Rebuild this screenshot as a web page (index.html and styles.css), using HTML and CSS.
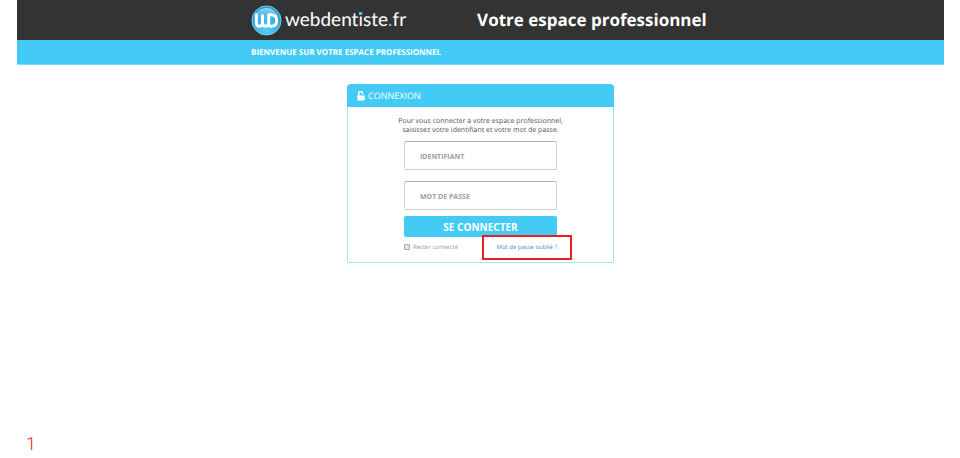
FILE: index.html
```html
<!DOCTYPE html>
<html lang="fr">
<head>
<meta charset="utf-8">
<title>Webdentiste.fr - Votre espace professionnel</title>
<link rel="stylesheet" href="styles.css">
</head>
<body>
<div class="page">
  <header class="topbar">
    <div class="container">
      <a class="brand" href="#">
        <svg class="brand-icon" viewBox="0 0 32 32" aria-hidden="true">
          <defs>
            <radialGradient id="disc" cx="50%" cy="85%" r="80%">
              <stop offset="0" stop-color="#4fd0f8"/>
              <stop offset="1" stop-color="#1c93cd"/>
            </radialGradient>
            <linearGradient id="shine" x1="0" y1="0" x2="0" y2="1">
              <stop offset="0" stop-color="#b4e3f7" stop-opacity=".8"/>
              <stop offset="1" stop-color="#58bfe9" stop-opacity=".2"/>
            </linearGradient>
          </defs>
          <circle cx="16" cy="16" r="15" fill="url(#disc)" stroke="#7fd0f2" stroke-width="1"/>
          <path d="M3 17a13 13 0 0 1 26-2C22 13 11 19 3 17Z" fill="url(#shine)"/>
          <path d="M5.500 10v8q0 4 3.200 4t3.200-4V11M11.900 18q0 4 3.200 4t3.200-4V10M18.300 10h2.700q5.500 0 5.500 6t-5.500 6h-1.200" fill="none" stroke="#fff" stroke-width="3" stroke-linecap="round" stroke-linejoin="round"/>
        </svg>
        <span class="brand-name">webdent<span class="brand-i">i</span>ste<span class="brand-dot">.</span>fr</span>
      </a>
      <h1 class="title">Votre espace professionnel</h1>
    </div>
  </header>
  <div class="welcome">
    <p class="container">BIENVENUE SUR VOTRE ESPACE PROFESSIONNEL</p>
  </div>
  <main class="card">
    <h2 class="card-head">
      <svg class="lock" viewBox="0 0 8 10" aria-hidden="true">
        <path d="M1.700 5V2.500a1.900 1.900 0 0 1 3.800 0v.8" fill="none" stroke="#fff" stroke-width="1.500"/>
        <path d="M.3 4.500h7.400V9.500H.3Z" fill="#fff"/>
        <path d="M3.700 6.300h.6v1.200h-.6Z" fill="#43cbf6"/>
      </svg>
      CONNEXION
    </h2>
    <form class="form">
      <p class="intro">Pour vous connecter à votre espace professionnel,<br>saisissez votre identifiant et votre mot de passe.</p>
      <input class="field" type="text" placeholder="IDENTIFIANT" aria-label="Identifiant">
      <input class="field" type="password" placeholder="MOT DE PASSE" aria-label="Mot de passe">
      <button class="submit" type="submit">SE CONNECTER</button>
      <div class="options">
        <label class="remember"><input class="check" type="checkbox">Rester connecté</label>
        <a class="forgot" href="#">Mot de passe oublié ?</a>
      </div>
    </form>
  </main>
  <footer class="step">1</footer>
</div>
</body>
</html>
```
FILE: styles.css
```css
* {
  box-sizing: border-box;
}

body {
  margin: 0;
  background: #fff;
  font-family: "Open Sans", sans-serif;
  text-rendering: geometricPrecision;
}

h1, h2, p {
  margin: 0;
}

.page {
  display: flex;
  flex-direction: column;
  min-height: 100vh;
  padding: 0 16px 0 17px;
}

.container {
  display: flex;
  align-items: center;
  width: 100%;
  max-width: 459px;
  margin: 0 auto;
}

.topbar {
  display: flex;
  height: 40px;
  background: #333;
}

.topbar .container {
  gap: 71px;
}

.brand {
  display: flex;
  align-items: center;
  gap: 3px;
  color: #fff;
  text-decoration: none;
}

.brand-icon {
  width: 31px;
  height: 31px;
}

.brand-name {
  font-family: Lato, sans-serif;
  font-size: 19px;
  font-variant-ligatures: none;
  line-height: 20px;
}

.brand-i {
  position: relative;
}

.brand-i::after {
  content: "";
  position: absolute;
  top: 4px;
  left: 1px;
  width: 3px;
  height: 3px;
  background: #43cbf6;
}

.brand-dot {
  color: #43cbf6;
}

.title {
  color: #fff;
  font-size: 17px;
  font-weight: 700;
  line-height: 24px;
  white-space: nowrap;
}

.welcome {
  display: flex;
  height: 25px;
  background: #43cbf6;
  border-bottom: 1px solid #7adbf9;
  color: #fff;
  font-size: 8px;
  font-weight: 700;
}

.card {
  width: 100%;
  max-width: 267px;
  margin: 19px auto 0;
  border: 1px solid #a5e5fa;
  border-radius: 4px 4px 0 0;
}

.card-head {
  display: flex;
  align-items: center;
  gap: 3px;
  height: 23px;
  margin: -1px -1px 0;
  padding: 0 10px;
  border-radius: 4px 4px 0 0;
  background: #43cbf6;
  color: #fff;
  font-size: 9px;
  font-weight: 400;
}

.lock {
  width: 8px;
  height: 10px;
}

.form {
  display: flex;
  flex-direction: column;
  align-items: center;
  padding: 10px 40px;
}

.intro {
  margin-bottom: 6px;
  color: #555;
  font-size: 7px;
  line-height: 9px;
  text-align: center;
  white-space: nowrap;
}

.field {
  width: 153px;
  height: 29px;
  margin-bottom: 11px;
  padding: 2px 15px 0;
  border: 1px solid #cfcdc4;
  border-top-color: #b5b3aa;
  border-radius: 2px;
  background: #fff;
  color: #555;
  font: 700 7px "Open Sans", sans-serif;
}

.field + .field {
  margin-bottom: 6px;
}

.field::placeholder {
  color: #a0a0a0;
  opacity: 1;
}

.submit {
  width: 153px;
  height: 21px;
  padding: 0;
  border: 0;
  border-radius: 2px;
  background: #43cbf6;
  color: #fff;
  font: 700 10px "Open Sans", sans-serif;
}

.options {
  display: flex;
  align-items: center;
  justify-content: space-between;
  width: 153px;
  margin-top: 5px;
  font-size: 6px;
  line-height: 10px;
}

.remember {
  display: flex;
  align-items: center;
  gap: 3px;
  color: #999;
}

.check {
  appearance: none;
  width: 6px;
  height: 6px;
  margin: 0;
  border: 1px solid #aaa;
  border-radius: 1px;
  background: #e4e4e4;
}

.forgot {
  position: relative;
  color: #3f92c2;
  text-decoration: none;
}

.forgot::after {
  content: "";
  position: absolute;
  inset: -7px -15px -8px -15px;
  border: 2px solid #ed1c24;
}

.step {
  margin-top: auto;
  padding: 0 9px 3px;
  color: #ed1c24;
  font-family: Roboto, sans-serif;
  font-size: 18px;
  font-weight: 300;
  line-height: 20px;
}
```
